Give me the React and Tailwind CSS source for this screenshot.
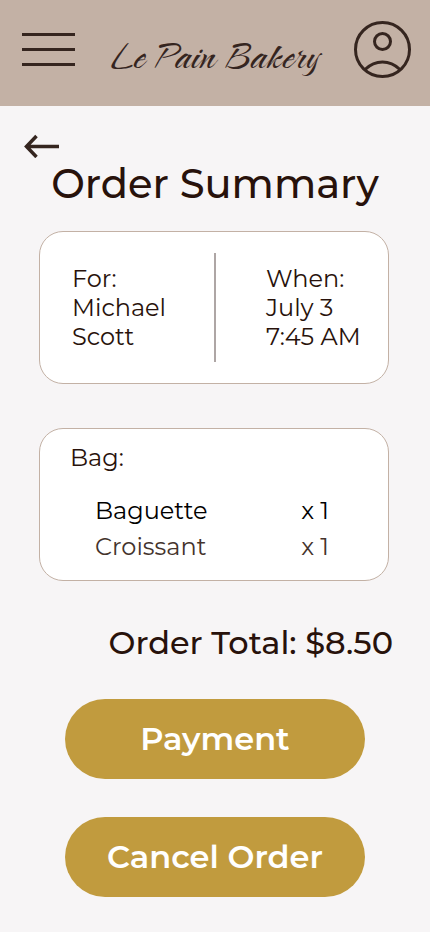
const items = [
  { name: 'Baguette', quantity: 1, tone: 'text-black' },
  { name: 'Croissant', quantity: 1, tone: 'text-[#44332c]' },
];

function Header() {
  return (
    <header className="flex h-[106px] items-center justify-between bg-[#c3b1a5] pr-[19px] pb-[7px] pl-[22px] text-[#35251f]">
      <button type="button" aria-label="Open menu" className="flex w-[53px] flex-col gap-3">
        <span className="h-[3px] w-full bg-current" />
        <span className="h-[3px] w-full bg-current" />
        <span className="h-[3px] w-full bg-current" />
      </button>
      <a
        href="#home"
        className="pt-2 font-['Caramel','Liberation_Serif',cursive] text-[48px] leading-10 whitespace-nowrap"
      >
        Le Pain Bakery
      </a>
      <button type="button" aria-label="Account">
        <svg viewBox="0 0 57 57" className="block size-[57px]" fill="none" stroke="currentColor" strokeWidth="3">
          <circle cx="28.5" cy="28.5" r="27" />
          <circle cx="28.5" cy="20.5" r="8" />
          <path d="M11 48.5C21.5 38.5 35.5 38.5 46 48.5" />
        </svg>
      </button>
    </header>
  );
}

function Card({ className, children }) {
  return (
    <section className={`min-h-[153px] rounded-[24px] border border-[#c3b1a5] bg-white ${className}`}>
      {children}
    </section>
  );
}

function Action({ children }) {
  return (
    <button
      type="button"
      className="h-20 w-full rounded-full bg-[#c19b3e] text-[32px] leading-10 font-semibold text-white"
    >
      {children}
    </button>
  );
}

export default function App() {
  return (
    <div className="min-h-screen bg-[#f7f5f6] font-['Montserrat','Inter',sans-serif] text-[#28120b]">
      <Header />
      <main className="pt-7 pr-[41px] pb-[35px] pl-[39px]">
        <a href="#back" aria-label="Back" className="-ml-4 block w-9">
          <svg viewBox="0 0 36 24" className="block h-6 w-9" fill="none" stroke="#35251f" strokeWidth="3.5">
            <path d="M36 12.5H4M13.5 2L3.5 12.5L13.5 23" />
          </svg>
        </a>
        <h1 className="-mr-[2px] text-center text-[40px] leading-[52px] font-medium whitespace-nowrap">
          Order Summary
        </h1>

        <Card className="mt-[21px] flex items-center pl-8 text-2xl leading-[29px]">
          <p className="w-[142px] pr-10">
            For:
            <br />
            Michael Scott
          </p>
          <div className="h-[109px] w-[2px] bg-[#aea6a5]" />
          <p className="flex-1 pl-[50px] whitespace-nowrap">
            When:
            <br />
            July 3
            <br />
            7:45 AM
          </p>
        </Card>

        <Card className="mt-[44px] pt-[14px] pr-[59px] pl-[30px] text-2xl leading-[29px]">
          <h2>Bag:</h2>
          <ul className="mt-6 flex flex-col gap-[7px] pl-[25px]">
            {items.map((item) => (
              <li key={item.name} className={`flex justify-between ${item.tone}`}>
                <span>{item.name}</span>
                <span>x {item.quantity}</span>
              </li>
            ))}
          </ul>
        </Card>

        <p className="mt-[42px] -mr-1 text-right text-[32px] leading-10 font-medium whitespace-nowrap">
          Order Total: $8.50
        </p>

        <div className="mt-9 flex flex-col gap-[38px] pr-6 pl-[26px]">
          <Action>Payment</Action>
          <Action>Cancel Order</Action>
        </div>
      </main>
    </div>
  );
}
